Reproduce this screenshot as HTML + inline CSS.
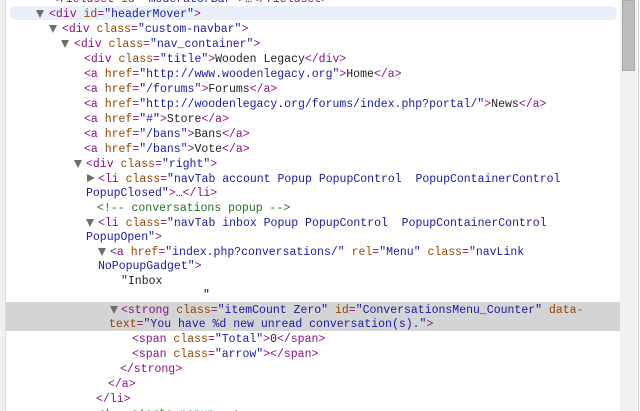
<!DOCTYPE html>
<html style="overflow:hidden;height:411px"><head><style>
body{margin:0;width:640px;height:411px;overflow:hidden;background:#fff;position:relative;font-family:"Liberation Mono",monospace;font-size:11.5px;}
.l{position:absolute;white-space:pre;height:14px;line-height:14px;color:#222;margin-top:2px}
.t{color:#881280}.a{color:#994500}.v{color:#1a1aa6}.c{color:#236e25}
.tri{position:absolute;width:0;height:0;margin-top:1px}
.dn{border-left:4.5px solid transparent;border-right:4.5px solid transparent;border-top:8px solid #6e6e6e;}
.rt{border-top:4.5px solid transparent;border-bottom:4.5px solid transparent;border-left:8px solid #6e6e6e;}
</style></head><body>
<div style="position:absolute;left:0;top:0;width:5px;height:411px;background:#f0f0f0;border-right:1px solid #dcdcdc"></div>
<div style="position:absolute;left:10px;top:6px;width:607px;height:14px;background:#e9f0fb;border-radius:5px"></div>
<div style="position:absolute;left:6px;top:302px;width:614px;height:29px;background:#d4d4d4"></div>
<div style="position:absolute;left:620px;top:0;width:17px;height:411px;background:#f1f1f1"></div>
<div style="position:absolute;left:622px;top:0;width:13px;height:71px;background:#bcbcbc;border:1px solid #aaa;box-sizing:border-box"></div>
<div style="position:absolute;left:638px;top:0;width:2px;height:411px;background:#fff;border-left:1px solid #ccc"></div>

<div class="l" style="left:52px;top:-9px"><span class="t">&lt;fieldset </span><span class="a">id</span><span class="t">=</span><span class="v">"moderatorBar"</span><span class="t">&gt;</span>…<span class="t">&lt;/fieldset&gt;</span></div>
<div class="tri dn" style="left:36px;top:9px"></div>
<div class="l" style="left:49px;top:6px"><span class="t">&lt;div </span><span class="a">id</span><span class="t">=</span><span class="v">"headerMover"</span><span class="t">&gt;</span></div>
<div class="tri dn" style="left:49px;top:24px"></div>
<div class="l" style="left:62px;top:21px"><span class="t">&lt;div </span><span class="a">class</span><span class="t">=</span><span class="v">"custom-navbar"</span><span class="t">&gt;</span></div>
<div class="tri dn" style="left:61px;top:39px"></div>
<div class="l" style="left:74px;top:36px"><span class="t">&lt;div </span><span class="a">class</span><span class="t">=</span><span class="v">"nav_container"</span><span class="t">&gt;</span></div>
<div class="l" style="left:84px;top:51px"><span class="t">&lt;div </span><span class="a">class</span><span class="t">=</span><span class="v">"title"</span><span class="t">&gt;</span>Wooden Legacy<span class="t">&lt;/div&gt;</span></div>
<div class="l" style="left:84px;top:66px"><span class="t">&lt;a </span><span class="a">href</span><span class="t">=</span><span class="v">"http://www.woodenlegacy.org"</span><span class="t">&gt;</span>Home<span class="t">&lt;/a&gt;</span></div>
<div class="l" style="left:84px;top:81px"><span class="t">&lt;a </span><span class="a">href</span><span class="t">=</span><span class="v">"/forums"</span><span class="t">&gt;</span>Forums<span class="t">&lt;/a&gt;</span></div>
<div class="l" style="left:84px;top:96px"><span class="t">&lt;a </span><span class="a">href</span><span class="t">=</span><span class="v">"http://woodenlegacy.org/forums/index.php?portal/"</span><span class="t">&gt;</span>News<span class="t">&lt;/a&gt;</span></div>
<div class="l" style="left:84px;top:111px"><span class="t">&lt;a </span><span class="a">href</span><span class="t">=</span><span class="v">"#"</span><span class="t">&gt;</span>Store<span class="t">&lt;/a&gt;</span></div>
<div class="l" style="left:84px;top:126px"><span class="t">&lt;a </span><span class="a">href</span><span class="t">=</span><span class="v">"/bans"</span><span class="t">&gt;</span>Bans<span class="t">&lt;/a&gt;</span></div>
<div class="l" style="left:84px;top:141px"><span class="t">&lt;a </span><span class="a">href</span><span class="t">=</span><span class="v">"/bans"</span><span class="t">&gt;</span>Vote<span class="t">&lt;/a&gt;</span></div>
<div class="tri dn" style="left:74px;top:159px"></div>
<div class="l" style="left:86px;top:156px"><span class="t">&lt;div </span><span class="a">class</span><span class="t">=</span><span class="v">"right"</span><span class="t">&gt;</span></div>
<div class="tri rt" style="left:87px;top:173px"></div>
<div class="l" style="left:98px;top:171px"><span class="t">&lt;li </span><span class="a">class</span><span class="t">=</span><span class="v">"navTab account Popup PopupControl  PopupContainerControl</span></div>
<div class="l" style="left:86px;top:185px"><span class="v">PopupClosed"</span><span class="t">&gt;</span>…<span class="t">&lt;/li&gt;</span></div>
<div class="l c" style="left:97px;top:200px">&lt;!-- conversations popup --&gt;</div>
<div class="tri dn" style="left:86px;top:218px"></div>
<div class="l" style="left:98px;top:215px"><span class="t">&lt;li </span><span class="a">class</span><span class="t">=</span><span class="v">"navTab inbox Popup PopupControl  PopupContainerControl</span></div>
<div class="l" style="left:86px;top:229px"><span class="v">PopupOpen"</span><span class="t">&gt;</span></div>
<div class="tri dn" style="left:98px;top:247px"></div>
<div class="l" style="left:110px;top:244px"><span class="t">&lt;a </span><span class="a">href</span><span class="t">=</span><span class="v">"index.php?conversations/"</span> <span class="a">rel</span><span class="t">=</span><span class="v">"Menu"</span> <span class="a">class</span><span class="t">=</span><span class="v">"navLink</span></div>
<div class="l" style="left:98px;top:258px"><span class="v">NoPopupGadget"</span><span class="t">&gt;</span></div>
<div class="l" style="left:121px;top:273px">"Inbox</div>
<div class="l" style="left:203px;top:287px">"</div>
<div class="tri dn" style="left:110px;top:305px"></div>
<div class="l" style="left:121px;top:302px"><span class="t">&lt;strong </span><span class="a">class</span><span class="t">=</span><span class="v">"itemCount Zero"</span> <span class="a">id</span><span class="t">=</span><span class="v">"ConversationsMenu_Counter"</span> <span class="a">data-</span></div>
<div class="l" style="left:109px;top:316px"><span class="a">text</span><span class="t">=</span><span class="v">"You have %d new unread conversation(s)."</span><span class="t">&gt;</span></div>
<div class="l" style="left:132px;top:331px"><span class="t">&lt;span </span><span class="a">class</span><span class="t">=</span><span class="v">"Total"</span><span class="t">&gt;</span>0<span class="t">&lt;/span&gt;</span></div>
<div class="l" style="left:132px;top:346px"><span class="t">&lt;span </span><span class="a">class</span><span class="t">=</span><span class="v">"arrow"</span><span class="t">&gt;&lt;/span&gt;</span></div>
<div class="l" style="left:120px;top:361px"><span class="t">&lt;/strong&gt;</span></div>
<div class="l" style="left:108px;top:376px"><span class="t">&lt;/a&gt;</span></div>
<div class="l" style="left:96px;top:391px"><span class="t">&lt;/li&gt;</span></div>
<div class="l c" style="left:97px;top:407px;height:2px;overflow:hidden;line-height:14px"><span style="position:relative;top:-1px">&lt;!-- alerts popup --&gt;</span></div>
</body></html>
